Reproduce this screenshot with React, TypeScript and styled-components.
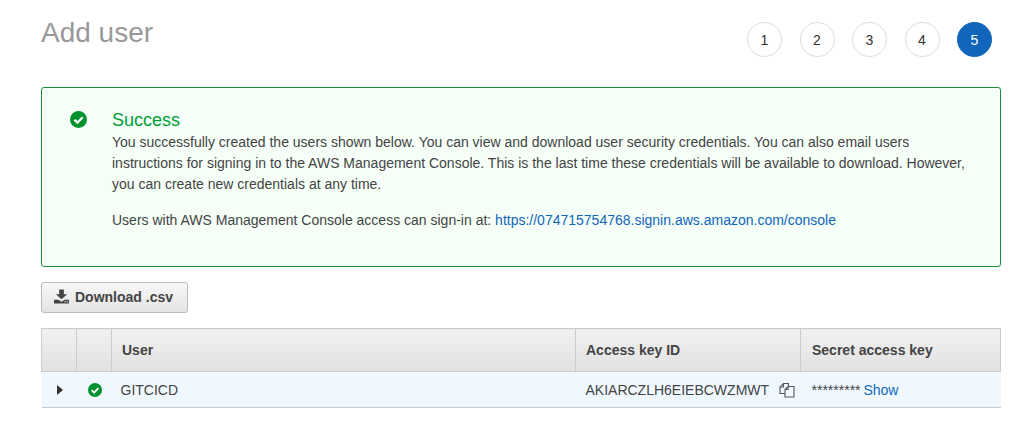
import React from "react";
import styled, { createGlobalStyle } from "styled-components";

const Global = createGlobalStyle`
  html, body { margin: 0; padding: 0; background: #fff; }
  body { font-family: "Liberation Sans", Arial, sans-serif; color: #444; font-size: 14px; }
`;
const Page = styled.div`
  width: 960px;
  height: 448px;
  margin-left: 41px;
  overflow: hidden;
`;
const Header = styled.header`
  display: flex;
  justify-content: space-between;
  height: 87px;
  padding-top: 16px;
  box-sizing: border-box;
`;
const Title = styled.h1`
  margin: 0;
  font-size: 28px;
  line-height: 34px;
  font-weight: 400;
  color: #999;
`;
const Steps = styled.ol`
  list-style: none;
  display: flex;
  gap: 17.5px;
  margin: 6px 9px 0 0;
  padding: 0;
`;
const Step = styled.li<{ $active?: boolean }>`
  width: 35px;
  height: 35px;
  box-sizing: border-box;
  border-radius: 50%;
  display: flex;
  align-items: center;
  justify-content: center;
  font-size: 14px;
  color: ${(p) => (p.$active ? "#fff" : "#333")};
  background: ${(p) => (p.$active ? "#1166bb" : "#fff")};
  border: 1px solid ${(p) => (p.$active ? "#1166bb" : "#ddd")};
`;
const Alert = styled.section`
  height: 180px;
  box-sizing: border-box;
  border: 1px solid #1d8f3a;
  border-radius: 3px;
  background: #f5fff8;
  display: flex;
  padding: 22px 20px 0 28px;
  gap: 25px;
`;
const AlertIcon = styled.div`
  width: 17px;
  flex: none;
  padding-top: 1px;
  line-height: 0;
`;
const AlertBody = styled.div`
  flex: 1;
`;
const AlertTitle = styled.h2`
  margin: 0 0 1px;
  font-size: 18px;
  line-height: 21px;
  font-weight: 400;
  color: #00a038;
`;
const Para = styled.p`
  margin: 0 0 15px;
  font-size: 14px;
  line-height: 21px;
  color: #444;
`;
const Link = styled.a`
  color: #1166bb;
  text-decoration: none;
`;
const Button = styled.button`
  display: flex;
  align-items: center;
  gap: 6px;
  width: 147px;
  height: 31px;
  margin: 15px 0;
  padding: 0 0 2px 12px;
  box-sizing: border-box;
  border: 1px solid #bbb;
  border-radius: 3px;
  background: linear-gradient(#f7f7f7, #e4e4e4);
  font: 700 14px "Liberation Sans", Arial, sans-serif;
  color: #444;
`;
const Table = styled.table`
  width: 960px;
  border-collapse: collapse;
  table-layout: fixed;
`;
const Th = styled.th<{ $w?: number }>`
  width: ${(p) => (p.$w ? `${p.$w}px` : "auto")};
  height: 43px;
  box-sizing: border-box;
  padding: 0 10px;
  text-align: left;
  font-size: 14px;
  font-weight: 700;
  color: #444;
  background: linear-gradient(#f1f1f1, #e1e1e1);
  border: 1px solid #ccc;
`;
const SecretTh = styled(Th)`
  padding-left: 11px;
`;
const Td = styled.td`
  height: 36px;
  box-sizing: border-box;
  padding: 0 10px;
  font-size: 14px;
  color: #444;
  background: #f0f8ff;
  border-bottom: 1px solid #ccc;
  white-space: nowrap;
`;
const UserCell = styled(Td)`
  padding-left: 9px;
`;
const SecretCell = styled(Td)`
  padding-left: 11px;
  word-spacing: -1px;
`;
const CenterCell = styled(Td)`
  padding: 0 0 0 2px;
  line-height: 0;
  text-align: center;
`;
const KeyRow = styled.div`
  display: flex;
  align-items: center;
  gap: 10px;
  svg { flex: none; }
`;

const Check = ({ size }: { size: number }) => (
  <svg width={size} height={size} viewBox="0 0 16 16" aria-hidden="true">
    <circle cx="8" cy="8" r="8" fill="#00912f" />
    <path d="M4.2 8.2 L7 11 L11.9 5.9" fill="none" stroke="#fff" strokeWidth="2.2" />
  </svg>
);

export default function App() {
  return (
    <Page>
      <Global />
      <Header>
        <Title>Add user</Title>
        <Steps>
          {[1, 2, 3, 4, 5].map((n) => (
            <Step key={n} $active={n === 5}>{n}</Step>
          ))}
        </Steps>
      </Header>
      <Alert>
        <AlertIcon><Check size={17} /></AlertIcon>
        <AlertBody>
          <AlertTitle>Success</AlertTitle>
          <Para>
            You successfully created the users shown below. You can view and download user security credentials. You can also email users instructions for signing in to the AWS Management Console. This is the last time these credentials will be available to download. However, you can create new credentials at any time.
          </Para>
          <Para>
            Users with AWS Management Console access can sign-in at:{" "}
            <Link href="#">https://074715754768.signin.aws.amazon.com/console</Link>
          </Para>
        </AlertBody>
      </Alert>
      <Button>
        <svg width="15" height="15" viewBox="0 0 16 15" aria-hidden="true">
          <path d="M5.5 0h5v5H14L8 10.5 2 5h3.5z" fill="#444" />
          <path d="M0 11h4.5L8 13l3.5-2H16v4H0z" fill="#444" />
          <path d="M11 12.5h1.5v1H11zM13.5 12.5H15v1h-1.5z" fill="#ddd" />
        </svg>
        Download .csv
      </Button>
      <Table>
        <thead>
          <tr>
            <Th $w={35} />
            <Th $w={35} />
            <Th $w={464}>User</Th>
            <Th $w={225}>Access key ID</Th>
            <SecretTh>Secret access key</SecretTh>
          </tr>
        </thead>
        <tbody>
          <tr>
            <CenterCell>
              <svg width="6" height="10" viewBox="0 0 6 10" aria-hidden="true"><path d="M0 0l6 5-6 5z" fill="#333" /></svg>
            </CenterCell>
            <CenterCell><Check size={14} /></CenterCell>
            <UserCell>GITCICD</UserCell>
            <Td>
              <KeyRow>
                AKIARCZLH6EIEBCWZMWT
                <svg width="16" height="16" viewBox="0 0 16 16" aria-hidden="true" fill="none" stroke="#555" strokeWidth="1.1">
                  <path d="M6 11.5H1V5L4.5 1.5H9.5V4" />
                  <path d="M4.5 1.5V5H1" />
                  <path d="M9 4.5H15V15H6V7.5z" />
                  <path d="M9 4.5V7.5H6" />
                </svg>
              </KeyRow>
            </Td>
            <SecretCell>********* <Link href="#">Show</Link></SecretCell>
          </tr>
        </tbody>
      </Table>
    </Page>
  );
}
